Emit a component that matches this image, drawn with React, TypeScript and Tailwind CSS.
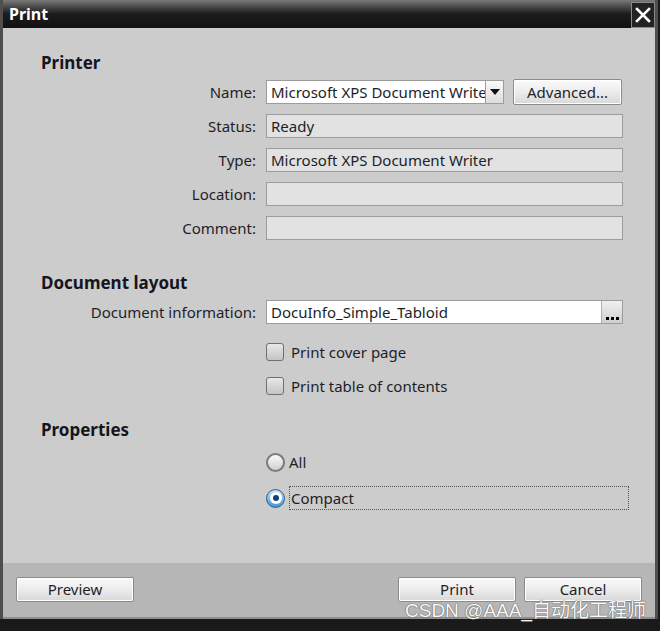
const font = { fontFamily: '"Noto Sans", "Open Sans", "Noto Sans CJK SC", sans-serif' };

function Label({ children }: { children: React.ReactNode }) {
  return <div className="pr-[10px] text-right text-[15px] text-[#1e1e28]">{children}</div>;
}

function ReadOnlyField({ value }: { value?: string }) {
  return (
    <div className="h-[24px] w-[357px] border border-[#9c9c9c] bg-[#e2e2e2] px-[4px] text-[15px] leading-[22px] text-[#1e1e28]">
      {value}
    </div>
  );
}

function Button({ label, size = "w-[118px] h-[25px]" }: { label: string; size?: string }) {
  return (
    <div
      className={`flex items-center justify-center rounded-[2px] border border-[#8c8c8c] bg-gradient-to-b from-[#fafafa] via-[#ececec] to-[#d8d8d8] text-[15px] text-[#1e1e28] shadow-[inset_0_0_0_1px_#ffffff] ${size}`}
    >
      {label}
    </div>
  );
}

function Checkbox({ label }: { label: string }) {
  return (
    <div className="flex h-[34px] items-center gap-[7px]">
      <div className="h-[18px] w-[18px] rounded-[3px] border border-[#6f6f6f] bg-gradient-to-b from-[#e8e8e8] to-[#c4c4c4]" />
      <span className="text-[15px] text-[#1e1e28]">{label}</span>
    </div>
  );
}

function Radio({ label, checked, focused }: { label: string; checked?: boolean; focused?: boolean }) {
  return (
    <div className="flex h-[34px] items-center gap-[4px]">
      {checked ? (
        <div className="flex h-[19px] w-[19px] items-center justify-center rounded-full border border-[#2e5f8e] bg-gradient-to-b from-[#bfe4ff] to-[#3f94d6]">
          <div className="flex h-[12px] w-[12px] items-center justify-center rounded-full bg-white">
            <div className="h-[6px] w-[6px] rounded-full bg-[#103f7a]" />
          </div>
        </div>
      ) : (
        <div className="h-[19px] w-[19px] rounded-full border-2 border-[#7a7a7a] bg-gradient-to-b from-[#fafafa] to-[#cfcfcf]" />
      )}
      <span
        className={`text-[15px] leading-[22px] text-[#1e1e28] ${
          focused ? "w-[340px] border border-dotted border-[#555] pl-[1px]" : ""
        }`}
      >
        {label}
      </span>
    </div>
  );
}

export default function App() {
  return (
    <div className="relative h-[631px] w-[660px] overflow-hidden bg-[#1a1a1a]" style={font}>
      <div className="flex h-[619px] w-[658px] flex-col border-x-[3px] border-[#4e4e4e] bg-[#cccccc]">
        {/* Title bar */}
        <div className="flex h-[28px] shrink-0 items-stretch justify-between bg-gradient-to-b from-[#7a7a7a] via-[#1c1c1c] to-[#111111]">
          <span className="pl-[6px] text-[16px] font-bold leading-[28px] text-white">Print</span>
          <div className="mt-[2px] flex h-[26px] w-[24px] items-center justify-center border border-[#8a8a8a] bg-[#222]">
            <svg width="16" height="16" viewBox="0 0 16 16">
              <path d="M2 2 L14 14 M14 2 L2 14" stroke="white" strokeWidth="2.6" strokeLinecap="square" />
            </svg>
          </div>
        </div>

        {/* Body */}
        <div className="flex-1 pl-[38px] pt-[23px]">
          <h2 className="text-[17px] font-bold leading-[24px] text-[#151520]">Printer</h2>
          <div className="grid grid-cols-[225px_1fr] items-center [grid-auto-rows:34px]">
            <Label>Name:</Label>
            <div className="flex items-center">
              <div className="flex h-[24px] w-[238px] border border-[#9c9c9c] bg-white">
                <span className="flex-1 overflow-hidden whitespace-nowrap px-[4px] text-[15px] leading-[22px] text-[#1e1e28]">
                  Microsoft XPS Document Writer
                </span>
                <div className="flex w-[18px] shrink-0 items-center justify-center border-l border-[#9c9c9c] bg-gradient-to-b from-[#fafafa] to-[#dcdcdc]">
                  <svg width="10" height="6" viewBox="0 0 10 6">
                    <path d="M0 0 H10 L5 6 Z" fill="#111" />
                  </svg>
                </div>
              </div>
              <div className="ml-[9px]">
                <Button label="Advanced..." size="w-[109px] h-[26px]" />
              </div>
            </div>
            <Label>Status:</Label>
            <ReadOnlyField value="Ready" />
            <Label>Type:</Label>
            <ReadOnlyField value="Microsoft XPS Document Writer" />
            <Label>Location:</Label>
            <ReadOnlyField />
            <Label>Comment:</Label>
            <ReadOnlyField />
          </div>

          <h2 className="mt-[26px] text-[17px] font-bold leading-[24px] text-[#151520]">Document layout</h2>
          <div className="grid grid-cols-[225px_1fr] items-center [grid-auto-rows:34px]">
            <Label>Document information:</Label>
            <div className="flex h-[24px] w-[357px] border border-[#9c9c9c] bg-white">
              <span className="flex-1 px-[4px] text-[15px] leading-[22px] text-[#1e1e28]">DocuInfo_Simple_Tabloid</span>
              <div className="flex w-[21px] items-end justify-center gap-[2px] border-l border-[#b0b0b0] bg-gradient-to-b from-[#f0f0f0] to-[#cfcfcf] pb-[3px]">
                <span className="h-[3px] w-[3px] bg-black" />
                <span className="h-[3px] w-[3px] bg-black" />
                <span className="h-[3px] w-[3px] bg-black" />
              </div>
            </div>
          </div>
          <div className="ml-[225px] mt-[6px]">
            <Checkbox label="Print cover page" />
            <Checkbox label="Print table of contents" />
          </div>

          <h2 className="mt-[15px] text-[17px] font-bold leading-[24px] text-[#151520]">Properties</h2>
          <div className="ml-[225px] mt-[3px] flex flex-col gap-[2px]">
            <Radio label="All" />
            <Radio label="Compact" checked focused />
          </div>
        </div>

        {/* Footer */}
        <div className="flex h-[56px] shrink-0 items-start justify-between border-b-2 border-[#8e8e8e] bg-[#b6b6b6] px-[13px] pt-[14px]">
          <Button label="Preview" />
          <div className="flex gap-[8px]">
            <Button label="Print" />
            <Button label="Cancel" />
          </div>
        </div>
      </div>

      <span
        className="absolute bottom-[9px] right-[14px] text-[19px] leading-[22px] text-[#fafafa] [text-shadow:0_0_1px_#555,0_0_1px_#555]"
        style={{ fontFamily: '"Liberation Sans", "Noto Sans CJK SC", sans-serif' }}
      >
        CSDN @AAA_自动化工程师
      </span>
    </div>
  );
}
